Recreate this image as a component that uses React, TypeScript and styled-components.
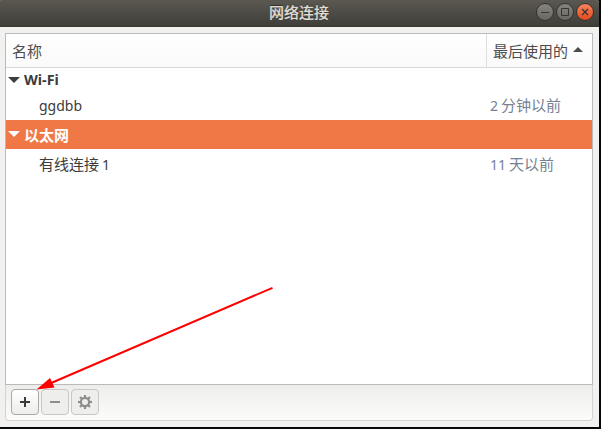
import React from "react";
import styled, { createGlobalStyle } from "styled-components";

const Global = createGlobalStyle`
  * { box-sizing: border-box; }
  body { margin: 0; background: #080808; overflow: hidden; }
  #root { font: 15px/22px "Noto Sans", "Noto Sans CJK SC", sans-serif; color: #3c3c3c; }
`;

const Window = styled.main`
  position: relative;
  width: 599px;
  height: 427px;
  display: flex;
  flex-direction: column;
  background: #f2f1f0;
  border-radius: 1px 3px 0 0;
  overflow: hidden;
`;

const TitleBar = styled.header`
  height: 27px;
  flex: none;
  display: grid;
  grid-template-columns: 1fr auto 1fr;
  align-items: center;
  padding: 0 5px 0 0;
  background: linear-gradient(#5b5851, #3f3e39);
  border-bottom: 1px solid #393833;
`;

const Title = styled.h1`
  grid-column: 2;
  margin: 0;
  padding: 0 0 2px 4px;
  font: 500 15px/22px "Noto Sans CJK SC", sans-serif;
  color: #dfdbd2;
  -webkit-text-stroke: .15px #dfdbd2;
  text-shadow: 0 -1px #33322e;
`;

const WindowControls = styled.div`
  display: flex;
  justify-content: flex-end;
  gap: 2px;
  padding-bottom: 2px;
`;

const Control = styled.button<{ $close?: boolean }>`
  width: 18px;
  height: 18px;
  padding: 0;
  display: grid;
  place-items: center;
  border: 1px solid #35342f;
  border-radius: 50%;
  background: ${p => p.$close ? "linear-gradient(#f58562, #e4481b)" : "linear-gradient(#85847f, #686762)"};
  color: #363530;
  svg { display: block; }
`;

const Frame = styled.section`
  width: 588px;
  height: 352px;
  margin: 6px 0 0 5px;
  flex: none;
  border: 1px solid #bcbbb9;
  background: #fff;
`;

const Columns = styled.div`
  display: grid;
  grid-template-columns: 481px 1fr;
  height: 34px;
  background: linear-gradient(#fff, #fafafa);
  border-bottom: 1px solid #d9d9d9;
`;

const Column = styled.div<{ $sorted?: boolean }>`
  display: flex;
  align-items: center;
  justify-content: space-between;
  padding: ${p => p.$sorted ? "0 9px 0 6px" : "0 6px"};
  border-right: ${p => p.$sorted ? "0" : "1px solid #dedede"};
  color: #4c4c4c;
  svg { margin-bottom: 3px; }
`;

const Group = styled.div<{ $selected?: boolean }>`
  display: flex;
  align-items: center;
  gap: 4px;
  height: ${p => p.$selected ? 29 : 24}px;
  padding: 0 2px;
  font-weight: 700;
  font-size: ${p => p.$selected ? 15 : 14.3}px;
  background: ${p => p.$selected ? "#f07746" : "transparent"};
  color: ${p => p.$selected ? "#fff" : "#3c3c3c"};
  svg { margin-bottom: ${p => p.$selected ? 2 : 1}px; }
`;

const Connection = styled.div<{ $height: number; $raised?: boolean }>`
  display: grid;
  grid-template-columns: 451px 1fr;
  align-items: center;
  height: ${p => p.$height}px;
  padding: ${p => p.$raised ? "0 0 1px 33px" : "1px 0 0 33px"};
  word-spacing: -1px;
`;

const Latin = styled.span`
  font-size: 14px;
`;

const LastUsed = styled.span`
  color: #758194;
`;

const Toolbar = styled.footer`
  display: flex;
  gap: 2px;
  width: 588px;
  height: 36px;
  flex: none;
  margin-left: 5px;
  padding: 4px 5px;
  border: 1px solid #d3d3d1;
  border-top: 0;
  border-radius: 0 0 4px 4px;
  background: linear-gradient(#ededeb, #fcfcfb);
`;

const ToolButton = styled.button`
  width: 28px;
  height: 26px;
  display: grid;
  place-items: center;
  padding: 0;
  border: 1px solid #aaa9a6;
  border-radius: 4px;
  background: linear-gradient(#fff, #ededeb);
  color: #3b3b3b;
  &:disabled { background: #eeeeec; border-color: #c9c8c6; color: #8d8d8a; }
`;

const Arrow = styled.svg`
  position: absolute;
  left: 30px;
  top: 280px;
  pointer-events: none;
`;

const Triangle = ({ up = false }: { up?: boolean }) => (
  <svg width={up ? 10 : 12} height={up ? 5 : 6}>
    <path d={up ? "M0 5L5 0L10 5Z" : "M0 0H12L6 6Z"} fill="currentColor" />
  </svg>
);

const Gear = () => (
  <svg width="14" height="14" viewBox="-7 -7 14 14" fill="none" stroke="currentColor">
    <circle r="4.1" strokeWidth="2.2" />
    {[0, 45, 90, 135, 180, 225, 270, 315].map(a => (
      <path key={a} d="M0-4.5V-7" strokeWidth="2.2" transform={`rotate(${a})`} />
    ))}
  </svg>
);

export default function App() {
  return (
    <>
      <Global />
      <Window>
        <TitleBar>
          <Title>网络连接</Title>
          <WindowControls>
            <Control aria-label="最小化"><svg width="8" height="8"><path d="M0 4.5H8" stroke="currentColor" /></svg></Control>
            <Control aria-label="最大化"><svg width="8" height="8"><path d="M.5.5H7.5V7.5H.5Z" stroke="currentColor" fill="none" /></svg></Control>
            <Control $close aria-label="关闭"><svg width="8" height="8"><path d="M1 1L7 7M7 1L1 7" stroke="currentColor" strokeWidth="1.3" /></svg></Control>
          </WindowControls>
        </TitleBar>
        <Frame>
          <Columns>
            <Column>名称</Column>
            <Column $sorted>最后使用的<Triangle up /></Column>
          </Columns>
          <Group><Triangle />Wi-Fi</Group>
          <Connection $height={28} $raised><Latin>ggdbb</Latin><LastUsed><Latin>2</Latin> 分钟以前</LastUsed></Connection>
          <Group $selected><Triangle />以太网</Group>
          <Connection $height={29}><span>有线连接 <Latin>1</Latin></span><LastUsed><Latin>11</Latin> 天以前</LastUsed></Connection>
        </Frame>
        <Toolbar>
          <ToolButton aria-label="添加"><svg width="10" height="10"><path d="M0 5H10M5 0V10" stroke="currentColor" strokeWidth="2" /></svg></ToolButton>
          <ToolButton disabled aria-label="删除"><svg width="10" height="10"><path d="M0 5H10" stroke="currentColor" strokeWidth="2" /></svg></ToolButton>
          <ToolButton disabled aria-label="设置"><Gear /></ToolButton>
        </Toolbar>
        <Arrow width="250" height="115">
          <path d="M242.5 7.8L20 103.5" stroke="#f00" strokeWidth="2" />
          <path d="M6.5 109.5L20 98L24.5 107.5Z" fill="#f00" />
        </Arrow>
      </Window>
    </>
  );
}
